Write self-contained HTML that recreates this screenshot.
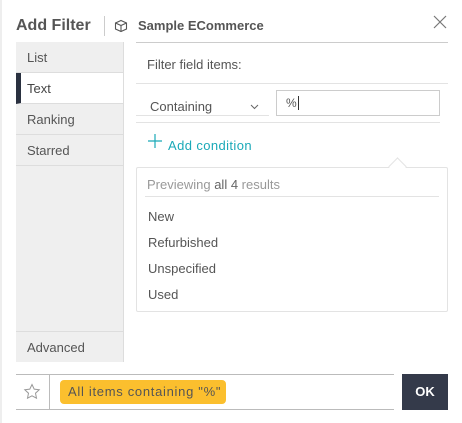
<!DOCTYPE html><html><head><style>
*{margin:0;padding:0;box-sizing:border-box}
body{width:462px;height:423px;background:#fff;font-family:"Liberation Sans",sans-serif;position:relative;overflow:hidden;color:#555}
.a{position:absolute}
.side{left:16px;top:42px;width:108px;height:320px;background:#efefef;border-right:1px solid #ddd}
.it{position:absolute;left:0;width:107px;height:31px;border-bottom:1px solid #ddd;font-size:13px;line-height:31px;padding-left:11px;color:#555}
.r{font-size:13px;color:#555}
</style></head><body>
<div class="a" style="left:0;top:0;width:2px;height:423px;background:#eee"></div>
<div class="a" style="left:16px;top:17px;font-size:16px;font-weight:bold;color:#555">Add Filter</div>
<div class="a" style="left:104px;top:16px;width:1px;height:20px;background:#ccc"></div>
<svg class="a" style="left:114px;top:19px" width="14" height="14" viewBox="0 0 14 14" fill="none" stroke="#555" stroke-width="1.1"><path d="M7 1.5L12.5 4v6L7 12.5 1.5 10V4z M1.5 4L7 6.5 12.5 4 M7 6.5v6"/></svg>
<div class="a" style="left:138px;top:18px;font-size:13px;font-weight:bold;color:#555">Sample ECommerce</div>
<svg class="a" style="left:433px;top:15px" width="14" height="14" viewBox="0 0 14 14" stroke="#777" stroke-width="1.2"><path d="M1 1L13 13M13 1L1 13"/></svg>
<div class="a side">
<div class="it" style="top:0">List</div>
<div class="it" style="top:31px;background:#fff;border-left:5px solid #2a3140;padding-left:6px;color:#444">Text</div>
<div class="it" style="top:62px">Ranking</div>
<div class="it" style="top:93px">Starred</div>
<div class="it" style="top:289px;border-top:1px solid #ddd;border-bottom:none">Advanced</div>
</div>
<div class="a" style="left:136px;top:42px;width:312px;height:1px;background:#ccc"></div>
<div class="a r" style="left:147px;top:57px">Filter field items:</div>
<div class="a" style="left:136px;top:83px;width:312px;height:1px;background:#e3e3e3"></div>
<div class="a r" style="left:150px;top:99px">Containing</div>
<svg class="a" style="left:250px;top:104px" width="9" height="6"><path d="M1 1l3.5 3.5L8 1" fill="none" stroke="#666"/></svg>
<div class="a" style="left:136px;top:115px;width:133px;height:1px;background:#e3e3e3"></div>
<div class="a" style="left:276px;top:90px;width:164px;height:26px;border:1px solid #ccc;font-size:12px;padding:5px 9px;color:#555">%<span style="border-left:1px solid #333;margin-left:1px"></span></div>
<div class="a" style="left:136px;top:122px;width:304px;height:1px;background:#e3e3e3"></div>
<svg class="a" style="left:148px;top:134px" width="14" height="14" stroke="#1aa9b8" stroke-width="1.2"><path d="M7 0v14M0 7h14"/></svg>
<div class="a" style="left:168px;top:138px;font-size:13px;color:#1aa9b8;letter-spacing:0.4px">Add condition</div>
<div class="a" style="left:136px;top:167px;width:312px;height:145px;border:1px solid #e3e3e3;border-radius:2px;background:#fff"></div>
<div class="a" style="left:391px;top:160px;width:13px;height:13px;background:#fff;border-left:1px solid #e3e3e3;border-top:1px solid #e3e3e3;transform:rotate(45deg)"></div>
<div class="a" style="left:147px;top:177px;font-size:13px;color:#999">Previewing <span style="color:#666">all 4</span> results</div>
<div class="a" style="left:145px;top:196px;width:294px;height:1px;background:#e3e3e3"></div>
<div class="a r" style="left:148px;top:209px">New</div>
<div class="a r" style="left:148px;top:235px">Refurbished</div>
<div class="a r" style="left:148px;top:261px">Unspecified</div>
<div class="a r" style="left:148px;top:287px">Used</div>
<div class="a" style="left:16px;top:374px;width:378px;height:36px;border-top:1px solid #bbb;border-bottom:1px solid #bbb"></div>
<div class="a" style="left:49px;top:375px;width:1px;height:34px;background:#bbb"></div>
<svg class="a" style="left:23px;top:383px" width="18" height="18" viewBox="0 0 18 18"><path d="M9 1.5l2.2 4.6 5 .6-3.7 3.5 1 5L9 12.8l-4.5 2.4 1-5L1.8 6.7l5-.6z" fill="none" stroke="#999"/></svg>
<div class="a" style="left:60px;top:380px;width:166px;height:24px;background:#fbbf2e;border-radius:4px;font-size:13px;line-height:24px;padding-left:8px;color:#555;letter-spacing:0.7px">All items containing "%"</div>
<div class="a" style="left:402px;top:374px;width:46px;height:36px;background:#343a4a;color:#fff;font-size:13px;font-weight:600;text-align:center;line-height:36px">OK</div>
</body></html>
